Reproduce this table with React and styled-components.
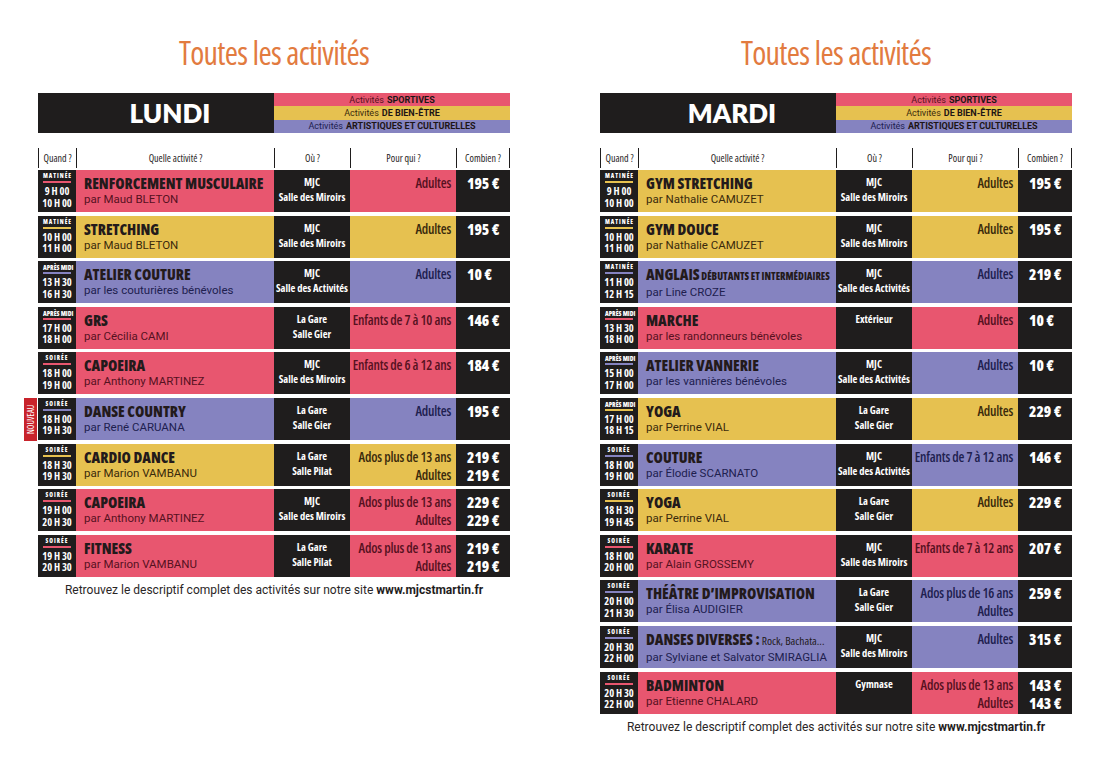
import React from 'react';
import styled, { createGlobalStyle, css } from 'styled-components';

const palette = {
  pink: { bg: '#e8566f', ink: '#56111f' },
  yellow: { bg: '#e6c150', ink: '#3a2a0c' },
  purple: { bg: '#8583c0', ink: '#20204f' },
};

const narrow = css`
  font-family: "Open Sans", "Roboto Condensed", sans-serif;
  font-stretch: 75%;
`;

const lundi = [
  { when: 'MATINÉE', t: ['9 H 00', '10 H 00'], title: 'RENFORCEMENT MUSCULAIRE', by: 'par Maud BLETON', where: ['MJC', 'Salle des Miroirs'], who: ['Adultes'], price: ['195 €'], c: 'pink' },
  { when: 'MATINÉE', t: ['10 H 00', '11 H 00'], title: 'STRETCHING', by: 'par Maud BLETON', where: ['MJC', 'Salle des Miroirs'], who: ['Adultes'], price: ['195 €'], c: 'yellow' },
  { when: 'APRÈS MIDI', t: ['13 H 30', '16 H 30'], title: 'ATELIER COUTURE', by: 'par les couturières bénévoles', where: ['MJC', 'Salle des Activités'], who: ['Adultes'], price: ['10 €'], c: 'purple' },
  { when: 'APRÈS MIDI', t: ['17 H 00', '18 H 00'], title: 'GRS', by: 'par Cécilia CAMI', where: ['La Gare', 'Salle Gier'], who: ['Enfants de 7 à 10 ans'], price: ['146 €'], c: 'pink' },
  { when: 'SOIRÉE', t: ['18 H 00', '19 H 00'], title: 'CAPOEIRA', by: 'par Anthony MARTINEZ', where: ['MJC', 'Salle des Miroirs'], who: ['Enfants de 6 à 12 ans'], price: ['184 €'], c: 'pink' },
  { when: 'SOIRÉE', t: ['18 H 00', '19 H 30'], title: 'DANSE COUNTRY', by: 'par René CARUANA', where: ['La Gare', 'Salle Gier'], who: ['Adultes'], price: ['195 €'], c: 'purple', isNew: true },
  { when: 'SOIRÉE', t: ['18 H 30', '19 H 30'], title: 'CARDIO DANCE', by: 'par Marion VAMBANU', where: ['La Gare', 'Salle Pilat'], who: ['Ados plus de 13 ans', 'Adultes'], price: ['219 €', '219 €'], c: 'yellow' },
  { when: 'SOIRÉE', t: ['19 H 00', '20 H 30'], title: 'CAPOEIRA', by: 'par Anthony MARTINEZ', where: ['MJC', 'Salle des Miroirs'], who: ['Ados plus de 13 ans', 'Adultes'], price: ['229 €', '229 €'], c: 'pink' },
  { when: 'SOIRÉE', t: ['19 H 30', '20 H 30'], title: 'FITNESS', by: 'par Marion VAMBANU', where: ['La Gare', 'Salle Pilat'], who: ['Ados plus de 13 ans', 'Adultes'], price: ['219 €', '219 €'], c: 'pink' },
];

const mardi = [
  { when: 'MATINÉE', t: ['9 H 00', '10 H 00'], title: 'GYM STRETCHING', by: 'par Nathalie CAMUZET', where: ['MJC', 'Salle des Miroirs'], who: ['Adultes'], price: ['195 €'], c: 'yellow' },
  { when: 'MATINÉE', t: ['10 H 00', '11 H 00'], title: 'GYM DOUCE', by: 'par Nathalie CAMUZET', where: ['MJC', 'Salle des Miroirs'], who: ['Adultes'], price: ['195 €'], c: 'yellow' },
  { when: 'MATINÉE', t: ['11 H 00', '12 H 15'], title: 'ANGLAIS', extra: 'DÉBUTANTS ET INTERMÉDIAIRES', by: 'par Line CROZE', where: ['MJC', 'Salle des Activités'], who: ['Adultes'], price: ['219 €'], c: 'purple' },
  { when: 'APRÈS MIDI', t: ['13 H 30', '18 H 00'], title: 'MARCHE', by: 'par les randonneurs bénévoles', where: ['Extérieur'], who: ['Adultes'], price: ['10 €'], c: 'pink' },
  { when: 'APRÈS MIDI', t: ['15 H 00', '17 H 00'], title: 'ATELIER VANNERIE', by: 'par les vannières bénévoles', where: ['MJC', 'Salle des Activités'], who: ['Adultes'], price: ['10 €'], c: 'purple' },
  { when: 'APRÈS MIDI', t: ['17 H 00', '18 H 15'], title: 'YOGA', by: 'par Perrine VIAL', where: ['La Gare', 'Salle Gier'], who: ['Adultes'], price: ['229 €'], c: 'yellow' },
  { when: 'SOIRÉE', t: ['18 H 00', '19 H 00'], title: 'COUTURE', by: 'par Élodie SCARNATO', where: ['MJC', 'Salle des Activités'], who: ['Enfants de 7 à 12 ans'], price: ['146 €'], c: 'purple' },
  { when: 'SOIRÉE', t: ['18 H 30', '19 H 45'], title: 'YOGA', by: 'par Perrine VIAL', where: ['La Gare', 'Salle Gier'], who: ['Adultes'], price: ['229 €'], c: 'yellow' },
  { when: 'SOIRÉE', t: ['18 H 00', '20 H 00'], title: 'KARATE', by: 'par Alain GROSSEMY', where: ['MJC', 'Salle des Miroirs'], who: ['Enfants de 7 à 12 ans'], price: ['207 €'], c: 'pink' },
  { when: 'SOIRÉE', t: ['20 H 00', '21 H 30'], title: 'THÉÂTRE D’IMPROVISATION', by: 'par Élisa AUDIGIER', where: ['La Gare', 'Salle Gier'], who: ['Ados plus de 16 ans', 'Adultes'], price: ['259 €'], c: 'purple' },
  { when: 'SOIRÉE', t: ['20 H 30', '22 H 00'], title: 'DANSES DIVERSES :', light: 'Rock, Bachata...', by: 'par Sylviane et Salvator SMIRAGLIA', where: ['MJC', 'Salle des Miroirs'], who: ['Adultes'], price: ['315 €'], c: 'purple' },
  { when: 'SOIRÉE', t: ['20 H 30', '22 H 00'], title: 'BADMINTON', by: 'par Etienne CHALARD', where: ['Gymnase'], who: ['Ados plus de 13 ans', 'Adultes'], price: ['143 €', '143 €'], c: 'pink' },
];

function DayPage({ day, rows }) {
  return (
    <Page>
      <Heading>Toutes les activités</Heading>
      <TopBar>
        <DayName>{day}</DayName>
        <Legend>
          <LegendStripe c="pink">Activités <b>SPORTIVES</b></LegendStripe>
          <LegendStripe c="yellow">Activités <b>DE BIEN-ÊTRE</b></LegendStripe>
          <LegendStripe c="purple">Activités <b>ARTISTIQUES ET CULTURELLES</b></LegendStripe>
        </Legend>
      </TopBar>
      <HeadRow>
        <HeadCell>Quand ?</HeadCell>
        <HeadCell>Quelle activité ?</HeadCell>
        <HeadCell>Où ?</HeadCell>
        <HeadCell>Pour qui ?</HeadCell>
        <HeadCell last>Combien ?</HeadCell>
      </HeadRow>
      <Rows>
        {rows.map((r, i) => (
          <Row key={i}>
            {r.isNew && <NewTag>NOUVEAU</NewTag>}
            <TimeCell>
              <When c={r.c} tight={r.when === 'APRÈS MIDI'}>{r.when}</When>
              <span>{r.t[0]}</span>
              <span>{r.t[1]}</span>
            </TimeCell>
            <ActivityCell c={r.c}>
              <Title>
                {r.title}
                {r.extra && <Extra> {r.extra}</Extra>}
                {r.light && <Light> {r.light}</Light>}
              </Title>
              <By c={r.c}>{r.by}</By>
            </ActivityCell>
            <PlaceCell>
              {r.where.map((w) => <span key={w}>{w}</span>)}
            </PlaceCell>
            <WhoCell c={r.c}>
              {r.who.map((w) => <span key={w}>{w}</span>)}
            </WhoCell>
            <PriceCell>
              {r.price.map((p, j) => <span key={j}>{p}</span>)}
            </PriceCell>
          </Row>
        ))}
      </Rows>
      <Footer>
        Retrouvez le descriptif complet des activités sur notre site <b>www.mjcstmartin.fr</b>
      </Footer>
    </Page>
  );
}

export default function App() {
  return (
    <>
      <GlobalStyle />
      <Spread>
        <DayPage day="LUNDI" rows={lundi} />
        <DayPage day="MARDI" rows={mardi} />
      </Spread>
    </>
  );
}

const GlobalStyle = createGlobalStyle`
  body {
    margin: 0;
    background: #ffffff;
    font-family: Roboto, "Liberation Sans", sans-serif;
  }
`;

const Spread = styled.div`
  display: flex;
  gap: 90px;
  padding-left: 38px;
  width: 1108px;
  height: 767px;
  box-sizing: border-box;
`;

const Page = styled.div`
  width: 472px;
  display: flex;
  flex-direction: column;
`;

const Heading = styled.h1`
  ${narrow}
  margin: 33px 0 0;
  height: 60px;
  text-align: center;
  font-weight: 400;
  font-size: 32px;
  letter-spacing: -0.7px;
  line-height: 40px;
  color: #e27b3f;
`;

const TopBar = styled.div`
  display: grid;
  grid-template-columns: 236px 236px;
  height: 40px;
`;

const DayName = styled.div`
  background: #1f1d1d;
  color: #ffffff;
  font-family: Lato, "Open Sans", sans-serif;
  font-weight: 800;
  font-size: 26px;
  display: flex;
  align-items: center;
  justify-content: center;
  padding-left: 28px;
`;

const Legend = styled.div`
  display: grid;
  grid-template-rows: repeat(3, 1fr);
`;

const LegendStripe = styled.div`
  background: ${(p) => palette[p.c].bg};
  color: ${(p) => palette[p.c].ink};
  font-family: Roboto, sans-serif;
  font-size: 9px;
  display: flex;
  align-items: center;
  justify-content: center;
  b {
    margin-left: 3px;
    color: #1d1515;
    font-weight: 700;
  }
`;

const HeadRow = styled.div`
  display: grid;
  grid-template-columns: 38px 198px 76px 106px 54px;
  height: 20px;
  margin-top: 15px;
`;

const HeadCell = styled.div`
  ${narrow}
  border-left: 1.5px solid #1f1d1d;
  ${(p) => p.last && 'border-right: 1.5px solid #1f1d1d;'}
  font-size: 10px;
  color: #1f1d1d;
  display: flex;
  align-items: center;
  justify-content: center;
`;

const Rows = styled.div`
  display: grid;
  grid-auto-rows: 42px;
  row-gap: 3.6px;
  margin-top: 2px;
`;

const Row = styled.div`
  position: relative;
  display: grid;
  grid-template-columns: 38px 198px 76px 106px 54px;
`;

const NewTag = styled.div`
  ${narrow}
  position: absolute;
  left: -14px;
  top: 0;
  width: 13px;
  height: 43px;
  background: #c8232b;
  color: #ffffff;
  font-size: 8.5px;
  writing-mode: vertical-rl;
  transform: rotate(180deg);
  display: flex;
  align-items: center;
  justify-content: center;
`;

const TimeCell = styled.div`
  ${narrow}
  background: #1f1d1d;
  color: #ffffff;
  font-weight: 700;
  font-size: 10.5px;
  line-height: 11.5px;
  display: flex;
  flex-direction: column;
  align-items: center;
  padding-top: 3px;
  white-space: nowrap;
`;

const When = styled.div`
  font-size: ${(p) => (p.tight ? '6.5px' : '6px')};
  font-weight: 800;
  line-height: 7px;
  letter-spacing: ${(p) => (p.tight ? '0' : '1px')};
  padding-bottom: 1px;
  border-bottom: 2px solid ${(p) => palette[p.c].bg};
  margin-bottom: 3px;
  width: 28px;
  text-align: center;
`;

const ActivityCell = styled.div`
  background: ${(p) => palette[p.c].bg};
  padding: 4px 0 0 8px;
  overflow: hidden;
`;

const Title = styled.div`
  ${narrow}
  font-weight: 800;
  font-size: 15px;
  line-height: 18px;
  color: #231a1b;
  white-space: nowrap;
`;

const Extra = styled.span`
  font-size: 10px;
`;

const Light = styled.span`
  font-weight: 500;
  font-size: 11.5px;
`;

const By = styled.div`
  font-family: Roboto, sans-serif;
  font-size: 11.5px;
  line-height: 14px;
  color: ${(p) => palette[p.c].ink};
  white-space: nowrap;
`;

const PlaceCell = styled.div`
  ${narrow}
  background: #1f1d1d;
  color: #ffffff;
  font-weight: 700;
  font-size: 10.5px;
  line-height: 15px;
  display: flex;
  flex-direction: column;
  align-items: center;
  padding-top: 5px;
  white-space: nowrap;
`;

const WhoCell = styled.div`
  ${narrow}
  background: ${(p) => palette[p.c].bg};
  color: ${(p) => palette[p.c].ink};
  font-weight: 600;
  font-size: 13.5px;
  letter-spacing: -0.2px;
  line-height: 18px;
  display: flex;
  flex-direction: column;
  align-items: flex-end;
  padding: 4px 5px 0 0;
  white-space: nowrap;
`;

const PriceCell = styled.div`
  ${narrow}
  background: #1f1d1d;
  color: #ffffff;
  font-weight: 800;
  font-size: 15px;
  line-height: 18px;
  display: flex;
  flex-direction: column;
  padding: 4px 0 0 11px;
  white-space: nowrap;
`;

const Footer = styled.div`
  margin-top: 6px;
  text-align: center;
  font-family: Roboto, sans-serif;
  font-size: 12px;
  color: #2a2626;
  b {
    color: #1f1d1d;
  }
`;
